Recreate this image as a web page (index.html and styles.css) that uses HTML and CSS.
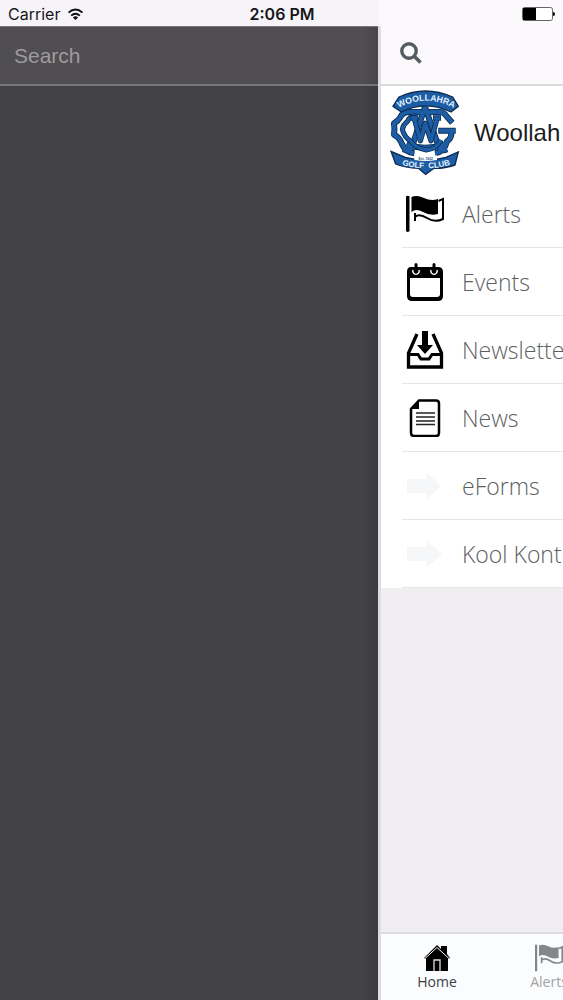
FILE: index.html
```html
<!DOCTYPE html>
<html lang="en">
<head>
<meta charset="utf-8">
<meta name="viewport" content="width=device-width, initial-scale=1">
<title>Woollahra Golf Club</title>
<link rel="stylesheet" href="styles.css">
</head>
<body>
<div class="app">
  <header class="status">
    <div class="status-left">
      <span>Carrier</span>
      <svg class="wifi" viewBox="0 0 18 14" aria-hidden="true"><path d="M1.5 5Q9-1.8 16.5 5M4.3 8.2Q9 4 13.7 8.2" fill="none" stroke="#111" stroke-width="2"/><path d="M6.2 10.2Q9 7.8 11.8 10.2L9 13Z" fill="#111"/></svg>
    </div>
    <time class="clock">2:06 PM</time>
    <div class="status-right">
      <svg class="battery" viewBox="0 0 34 14" aria-hidden="true"><rect x=".5" y=".5" width="30" height="13" rx="2" fill="#fff" stroke="#666"/><path d="M1 1h13v12H1z"/><path d="M31 5q2 0 2 2t-2 2z"/></svg>
    </div>
  </header>

  <div class="stage">
    <aside class="drawer">
      <input class="search" type="search" placeholder="Search" aria-label="Search">
    </aside>

    <main class="panel">
      <div class="navbar">
        <button class="icon-button" type="button" aria-label="Open search">
          <svg viewBox="0 0 22 22"><circle cx="9" cy="9" r="7.2" fill="none" stroke="#555c61" stroke-width="3.4"/><path d="M14 14l6.5 6.5" stroke="#555c61" stroke-width="3.6"/></svg>
        </button>
      </div>

      <div class="club">
        <svg class="crest" viewBox="45 28 210 258" role="img" aria-label="Woollahra Golf Club crest">
          <g fill="none" stroke-linejoin="round">
            <g stroke="#0c2c50" stroke-width="18">
              <path d="M138 94H108Q84 92 77 108Q70 120 57 128Q60 146 57 162Q74 170 80 188Q90 214 118 218"/>
              <path d="M160 94H192Q208 94 214 106L232 126M190 150H242M228 150Q232 172 216 182Q208 214 180 218"/>
              <path d="M150 78L112 196Q104 214 84 206M150 78L190 196Q198 214 216 206M94 192Q150 210 208 192"/>
            </g>
            <g stroke="#1c5da6" stroke-width="13">
              <path d="M138 94H108Q84 92 77 108Q70 120 57 128Q60 146 57 162Q74 170 80 188Q90 214 118 218"/>
              <path d="M160 94H192Q208 94 214 106L232 126M190 150H242M228 150Q232 172 216 182Q208 214 180 218"/>
              <path d="M150 78L112 196Q104 214 84 206M150 78L190 196Q198 214 216 206M94 192Q150 210 208 192"/>
            </g>
            <path d="M124 106Q104 104 98 122Q84 132 82 146Q88 170 108 182Q122 202 154 208Q184 206 198 178" stroke="#0c2c50" stroke-width="15"/>
            <path d="M124 106Q104 104 98 122Q84 132 82 146Q88 170 108 182Q122 202 154 208Q184 206 198 178" stroke="#1c5da6" stroke-width="10"/>
            <path d="M118 114L136 180L151 128L168 180L186 114M106 112H130M174 112H198" stroke="#0c2c50" stroke-width="16"/>
            <path d="M118 114L136 180L151 128L168 180L186 114M108 112H128M176 112H196" stroke="#1c5da6" stroke-width="11"/>
          </g>
          <path d="M72 49Q150 13 233 49L250 77L228 94Q152 57 79 94L54 77Z" fill="#1c5da6" stroke="#0c2c50" stroke-width="4"/>
          <path d="M48 212L91 230Q152 246 213 230L250 214L240 253Q207 264 177 263L152 281L130 263Q91 262 62 250Z" fill="#1c5da6" stroke="#0c2c50" stroke-width="4"/>
          <path d="M118 224Q152 230 186 224V238Q152 244 118 238Z" fill="#fff"/>
          <path id="arc-top" d="M68 84Q152 36 240 84" fill="none"/>
          <path id="arc-base" d="M64 247Q152 279 243 247" fill="none"/>
          <text class="crest-name"><textPath href="#arc-top" startOffset="50%">WOOLLAHRA</textPath></text>
          <text class="crest-club"><textPath href="#arc-base" startOffset="50%">GOLF&#160;&#160;CLUB</textPath></text>
          <text class="crest-est" x="152" y="237">Est. 1922</text>
        </svg>
        <h1 class="club-name">Woollah</h1>
      </div>

      <nav class="menu">
        <a class="item" href="#alerts">
          <svg class="item-icon" viewBox="0 0 38 38"><path d="M0 1.5Q1.700 0 3.500 1.500V36Q1.700 38 0 36Z"/><path d="M5.500 2Q11-.5 18 3T32 4V19Q24 21 17 17T5.500 17Z"/><path d="M32.500 6L37 4V24Q29 28 21 23T9 22V18V26" fill="none" stroke="#000" stroke-width="2"/></svg>
          <span>Alerts</span>
        </a>
        <a class="item" href="#events">
          <svg class="item-icon" viewBox="0 0 38 38"><path fill-rule="evenodd" d="M5 4H32Q37 4 37 9V33Q37 38 32 38H6Q1 38 1 33V9Q1 4 5 4ZM4 15V31Q4 34 7 34H31Q34 34 34 31V15Z"/><path d="M7 7a3.2 3.2 0 1 0 6 0M25 7a3.2 3.2 0 1 0 6 0" fill="none" stroke="#fff" stroke-width="1.5"/><path d="M10 1.500V9M28 1.500V9" stroke="#000" stroke-width="3" stroke-linecap="round"/></svg>
          <span>Events</span>
        </a>
        <a class="item" href="#newsletter">
          <svg class="item-icon" viewBox="0 0 38 38"><path d="M11 3L2.5 22V36H35.500V22L27 3" fill="none" stroke="#000" stroke-width="3.300"/><path d="M2 23.500H12L15 28H23L26 23.500H36" fill="none" stroke="#000" stroke-width="3"/><path d="M16 0H22V14H27L19 23L11 14H16Z"/></svg>
          <span>Newslette</span>
        </a>
        <a class="item" href="#news">
          <svg class="item-icon" viewBox="0 0 38 38"><path d="M13 1.500H30Q33 1.500 33 4.500V34Q33 37 30 37H8Q5 37 5 34V10Z" fill="none" stroke="#000" stroke-width="2.500"/><path d="M13 1V10H4Z"/><path d="M10 14H29M10 18H29M10 22H29M10 25.500H29" stroke="#222" stroke-width="1.300"/></svg>
          <span>News</span>
        </a>
        <a class="item" href="#eforms">
          <svg class="item-icon" viewBox="0 0 38 38"><path d="M1 12H21V6L35 19L21 32V26H1Z" fill="#f5f6f8"/></svg>
          <span>eForms</span>
        </a>
        <a class="item" href="#kool">
          <svg class="item-icon" viewBox="0 0 38 38"><path d="M1 12H21V6L36 19L21 32V26H1Z" fill="#f5f6f8"/></svg>
          <span>Kool Kont</span>
        </a>
      </nav>

      <nav class="tabs">
        <a class="tab" href="#home" aria-current="page">
          <svg viewBox="0 0 28 28"><path d="M14 1L18 5V2H24V10L27 14L25 15V27H3V15L1 14Z"/><path d="M2 14.500L14 3.500L26 14.500" fill="none" stroke="#fff" stroke-width="1"/><path d="M11 27V16H17V27" fill="none" stroke="#ddd" stroke-width="1.300"/></svg>
          <span>Home</span>
        </a>
        <a class="tab" href="#alerts">
          <svg viewBox="0 0 38 38"><path d="M0 1H3V37H0Z"/><path d="M5.500 2Q11-.5 18 3T32 4V19Q24 21 17 17T5.500 17Z"/><path d="M32.500 6L37 4V24Q29 28 21 23T9 22V18V26" fill="none" stroke="#858688" stroke-width="2.300"/></svg>
          <span>Alerts</span>
        </a>
      </nav>
    </main>
  </div>
</div>
</body>
</html>
```
FILE: styles.css
```css
* { box-sizing: border-box; }

body {
  margin: 0;
  overflow: hidden;
  font-family: "Open Sans", sans-serif;
  background: #f0eef0;
}

a { text-decoration: none; color: inherit; }
svg { display: block; flex: none; }

.app {
  display: flex;
  flex-direction: column;
  min-height: 100vh;
}

.status {
  display: grid;
  grid-template-columns: 1fr auto 1fr;
  align-items: center;
  height: 26px;
  padding: 2px 7px 0 8px;
  background: linear-gradient(to left, #fbf9fc 184px, #f6f4f8 184px);
  font-family: Inter, sans-serif;
  font-size: 16px;
  line-height: 24px;
  color: #161618;
}

.status-left { display: flex; align-items: center; gap: 7px; }
.status-right { display: flex; justify-content: flex-end; }
.clock { font-weight: 600; }
.wifi { width: 17px; height: 13px; }
.battery { width: 34px; height: 14px; }

.stage {
  flex: 1;
  display: grid;
  grid-template-columns: minmax(0, 1fr) 185px;
}

.drawer {
  background: linear-gradient(to left, #3b3a3c, #434244 16px);
}

.search {
  display: block;
  width: 100%;
  height: 60px;
  padding: 0 14px;
  border: 0;
  border-top: 1px solid #777579;
  border-bottom: 2px solid #777579;
  border-radius: 0;
  outline: 0;
  appearance: none;
  background: linear-gradient(to left, #474548, #504e51 16px);
  font-family: "Liberation Sans", Arial, sans-serif;
  font-size: 21px;
  color: #fff;
}

.search::placeholder { color: #9d9b9e; opacity: 1; }

.panel {
  display: flex;
  flex-direction: column;
  min-width: 0;
  overflow: hidden;
  border-left: 3px solid #dedce0;
  background: #f0eef0;
  white-space: nowrap;
}

.navbar {
  height: 60px;
  padding: 16px 19px;
  border-bottom: 2px solid #dcdadd;
  background: #fbf9fc;
}

.icon-button {
  display: block;
  padding: 0;
  border: 0;
  background: none;
}

.icon-button svg { width: 22px; height: 22px; }

.club {
  display: flex;
  align-items: center;
  gap: 14px;
  height: 94px;
  padding: 0 0 0 9px;
  background: #fff;
}

.crest { width: 70px; height: 86px; }

.crest text {
  font-family: "Liberation Sans", Arial, sans-serif;
  font-weight: 700;
  text-anchor: middle;
  fill: #e4f0fc;
}

.crest .crest-name { font-size: 26px; }
.crest .crest-club { font-size: 24px; }
.crest .crest-est { font-size: 10px; fill: #1c4f8a; }

.club-name {
  margin: 0;
  font-family: "Liberation Sans", Arial, sans-serif;
  font-size: 24px;
  font-weight: 400;
  color: #1c1c1e;
}

.menu { padding-left: 21px; background: #fff; }

.item {
  display: flex;
  align-items: center;
  gap: 18px;
  height: 68px;
  padding-left: 4px;
  border-bottom: 1px solid #e6e4e8;
  font-size: 23px;
  font-weight: 300;
  color: #5c5f62;
}

.item-icon { width: 38px; height: 38px; }

.tabs {
  display: flex;
  margin-top: auto;
  height: 68px;
  border-top: 2px solid #dedce0;
  background: #fbfcfd;
}

.tab {
  display: flex;
  flex: none;
  flex-direction: column;
  align-items: center;
  width: 112px;
  padding-top: 10px;
  font-size: 14px;
  line-height: 20px;
  color: #a2a3a5;
  fill: #858688;
}

.tab svg { width: 28px; height: 28px; }
.tab[aria-current] { color: #3c3e40; fill: #000; }
```
